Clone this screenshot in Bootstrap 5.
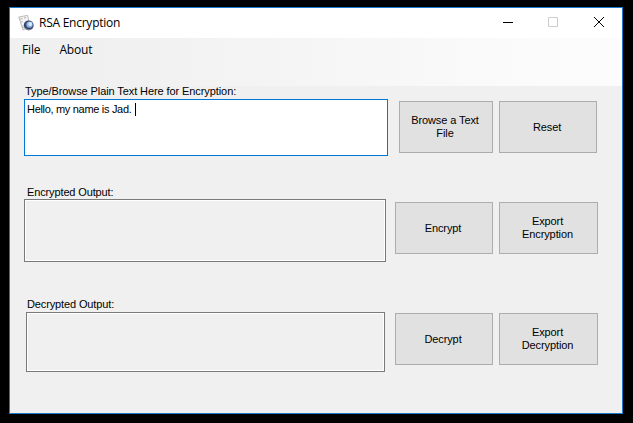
<!DOCTYPE html>
<html lang="en">
<head>
<meta charset="utf-8">
<meta name="viewport" content="width=device-width, initial-scale=1">
<title>RSA Encryption</title>
<link href="https://cdn.jsdelivr.net/npm/bootstrap@5.3.0/dist/css/bootstrap.min.css" rel="stylesheet">
<style>
body{background:#000;height:423px;padding:7px 10px 9px 9px;font:11px/13px "Liberation Sans",Arial,sans-serif;color:#000}
.app-window{height:407px;background:#f0f0f0;border:1px solid #1979ca}
.title-bar{height:30px;font:12px/16px "Open Sans","Noto Sans",sans-serif}
.title-text{letter-spacing:-.25px}
.app-icon{margin:0 5px 0 8px}
.caption-btn{width:46px;height:30px}
.menu-strip{height:48px;background:linear-gradient(90deg,#f0f0f0 0,#f0f0f0 15%,#fbfbfb 85%,#fcfcfc);font:12px/16px "Open Sans","Noto Sans",sans-serif}
.menu-strip .nav-link{color:#000;padding:4px 0 0;margin-left:12px;letter-spacing:-.15px}
.menu-strip .nav-link+.nav-link{margin-left:19px}
.field-label{height:13px;white-space:nowrap;letter-spacing:-.13px}
.text-area{border:1px solid #7a7a7a;box-shadow:inset 0 0 0 1px #fff}
.text-area.active{border-color:#0078d7;background:#fff;padding:3px 2px;letter-spacing:-.31px}
.caret{display:inline-block;width:1px;height:13px;background:#000;vertical-align:top;margin-left:4px}
.push{height:52px;border:1px solid #adadad;border-radius:0;background:#e1e1e1;color:#000;padding:0 2px 0 0;font-size:11px;line-height:13px;letter-spacing:-.1px}
.group-plain{padding:0 0 0 14px}
.group-plain .field-label{margin-left:1px;line-height:11px;letter-spacing:-.09px}
.group-plain .text-area{width:364px;height:57px}
.group-plain .actions{margin:2px 0 0 11px}
.group-enc{padding:30px 0 0 14px}
.group-enc .field-label,.group-dec .field-label{margin-left:3px}
.group-enc .text-area{width:362px;height:63px}
.group-enc .actions{margin:3px 0 0 9px}
.group-dec{padding:36px 0 0 14px}
.group-dec .field-label{height:14px}
.group-dec .text-area{width:359px;height:60px;margin-left:2px}
.group-dec .actions{margin:1px 0 0 10px}
.w94{width:94px}.w98{width:98px}.w99{width:99px}
.actions{gap:6px}
</style>
</head>
<body>
<main class="app-window d-flex flex-column">
  <header class="title-bar bg-white d-flex align-items-center">
    <svg class="app-icon" width="16" height="16" viewBox="0 0 16 16">
      <path d="M.8 2 9.5.4l2.8 10.9L5 15z" fill="#f4f4f4" stroke="#aaa" stroke-width=".8"/>
      <path d="M2.3 4.2l2.3-.7M6 3l2-.5M3.2 7l1.4-.4M4.2 11.5l1.8 1" stroke="#999" stroke-width=".8"/>
      <circle cx="10.7" cy="10.3" r="4.9" fill="#33466b"/>
      <path d="M6 11.5a4.9 4.9 0 0 0 9.3.7c-1.5 1.7-3 2.3-4.6 2-1.8-.3-3.2-1-4.7-2.7z" fill="#858c99"/>
      <circle cx="11.5" cy="9.6" r="3.2" fill="#8eb3e3"/>
      <circle cx="12.2" cy="9" r="1.9" fill="#dcecff"/>
    </svg>
    <span class="title-text">RSA Encryption</span>
    <div class="d-flex ms-auto">
      <svg class="caption-btn" viewBox="0 0 46 30" shape-rendering="crispEdges"><path d="M19 14h10v1H19z"/></svg>
      <svg class="caption-btn" viewBox="0 0 46 30"><path d="M18.5 9.5h9v9h-9z" fill="none" stroke="#ccc"/></svg>
      <svg class="caption-btn" viewBox="0 0 46 30"><path d="M18 9l10 10M28 9L18 19" stroke="#000"/></svg>
    </div>
  </header>
  <nav class="menu-strip d-flex align-items-start">
    <a class="nav-link" href="#">File</a>
    <a class="nav-link" href="#">About</a>
  </nav>
  <section class="group-plain">
    <div class="field-label">Type/Browse Plain Text Here for Encryption:</div>
    <div class="d-flex">
      <div class="text-area active">Hello, my name is Jad.<span class="caret"></span></div>
      <div class="actions d-flex">
        <button class="btn push w94">Browse a Text<br>File</button>
        <button class="btn push w98">Reset</button>
      </div>
    </div>
  </section>
  <section class="group-enc">
    <div class="field-label">Encrypted Output:</div>
    <div class="d-flex">
      <div class="text-area"></div>
      <div class="actions d-flex">
        <button class="btn push w98">Encrypt</button>
        <button class="btn push w99">Export<br>Encryption</button>
      </div>
    </div>
  </section>
  <section class="group-dec">
    <div class="field-label">Decrypted Output:</div>
    <div class="d-flex">
      <div class="text-area"></div>
      <div class="actions d-flex">
        <button class="btn push w98">Decrypt</button>
        <button class="btn push w99">Export<br>Decryption</button>
      </div>
    </div>
  </section>
</main>
<script src="https://cdn.jsdelivr.net/npm/bootstrap@5.3.0/dist/js/bootstrap.bundle.min.js"></script>
</body>
</html>
